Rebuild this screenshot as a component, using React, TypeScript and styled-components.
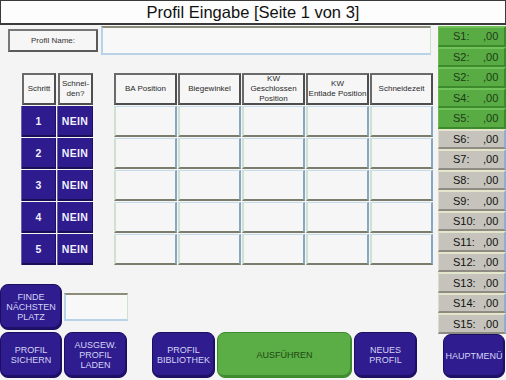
import { FC, Fragment } from "react";
import styled, { createGlobalStyle } from "styled-components";

const GlobalStyle = createGlobalStyle`
  html, body {
    margin: 0;
    padding: 0;
    background: #f4f4f4;
  }
  * {
    box-sizing: border-box;
  }
`;

const Screen = styled.div`
  width: 506px;
  height: 380px;
  display: grid;
  grid-template-columns: 438px 68px;
  grid-template-rows: 25px 355px;
  background: #f4f4f4;
  font-family: "Liberation Sans", Arial, sans-serif;
  overflow: hidden;
`;

const TitleBar = styled.div`
  grid-column: 1 / 3;
  background: #fdfdfd;
  border: 1px solid #3a3a3a;
  border-bottom-width: 2px;
  display: flex;
  align-items: center;
  justify-content: center;
  font-size: 16.5px;
  color: #111;
`;

const Main = styled.div`
  display: flex;
  flex-direction: column;
`;

const NameRow = styled.div`
  display: flex;
  align-items: center;
  gap: 3px;
  margin-top: 1px;
  padding-left: 8px;
  height: 29px;
`;

const NameLabel = styled.div`
  width: 90px;
  height: 23px;
  border: 2px solid #5a5a5a;
  border-top-color: #777;
  border-left-color: #777;
  background: #f6f6f6;
  display: flex;
  align-items: center;
  justify-content: center;
  font-size: 8px;
  color: #333;
`;

const TextField = styled.div<{ $w: number; $h: number }>`
  width: ${(p) => p.$w}px;
  height: ${(p) => p.$h}px;
  background: #f8f8f8;
  border-top: 2px solid #8c8c7a;
  border-left: 2px solid #b8d2ea;
  border-bottom: 2px solid #b8d2ea;
  border-right: 1px solid #cfe2cf;
`;

const Tables = styled.div`
  display: flex;
  gap: 21px;
  margin-top: 18px;
  padding-left: 22px;
`;

const Grid = styled.div<{ $cols: string }>`
  display: grid;
  grid-template-columns: ${(p) => p.$cols};
  grid-template-rows: 32px repeat(5, 31px);
  column-gap: 1px;
  row-gap: 1px;
  align-content: start;
`;

const HeadCell = styled.div`
  border: 2px solid #4e4e4e;
  border-top-color: #6a6a6a;
  border-left-color: #6a6a6a;
  background: #f6f6f6;
  display: flex;
  align-items: center;
  justify-content: center;
  text-align: center;
  font-size: 8px;
  line-height: 10px;
  color: #2a2a2a;
`;

const StepCell = styled.div`
  background: #2e1b8d;
  border-right: 1px solid #1c1060;
  border-bottom: 2px solid #1a0f55;
  display: flex;
  align-items: center;
  justify-content: center;
  color: #f0f0ff;
  font-weight: bold;
  font-size: 10.5px;
  letter-spacing: 0.3px;
`;

const StepGrid = styled(Grid)`
  column-gap: 2px;
  & > ${StepCell} {
    box-shadow: -1px 0 0 #6a62a8;
  }
`;

const ValueCell = styled.div`
  background: #f6f6f6;
  border-top: 1px solid #c6dcec;
  border-left: 2px solid #cfe2cf;
  border-right: 2px solid #86a6c4;
  border-bottom: 2px solid #7c7c6c;
`;

const Bottom = styled.div`
  margin-top: auto;
  display: flex;
  flex-direction: column;
  gap: 2px;
  padding-bottom: 2px;
`;

const ButtonRow = styled.div`
  display: flex;
  align-items: center;
  gap: 2px;
`;

const Spacer = styled.div<{ $w: number }>`
  width: ${(p) => p.$w}px;
`;

const PadButton = styled.div<{ $w?: number; $h?: number; $green?: boolean }>`
  width: ${(p) => p.$w ?? 63}px;
  height: ${(p) => p.$h ?? 46}px;
  border-radius: 8px;
  background: ${(p) => (p.$green ? "#5bad45" : "#2f1c8e")};
  border: 1px solid ${(p) => (p.$green ? "#3d8a2e" : "#1c0f60")};
  box-shadow: inset -1px -2px 0 ${(p) => (p.$green ? "#3f8c30" : "#1e1066")};
  display: flex;
  align-items: center;
  justify-content: center;
  text-align: center;
  font-size: 9px;
  line-height: 10px;
  color: ${(p) => (p.$green ? "#1e4a14" : "#d4d4f6")};
  text-transform: uppercase;
`;

const Side = styled.div`
  display: flex;
  flex-direction: column;
  padding-top: 1px;
`;

const SList = styled.div`
  display: grid;
  height: 308px;
  grid-template-rows: repeat(15, 1fr);
`;

const SButton = styled.div<{ $on: boolean }>`
  display: grid;
  grid-template-columns: 14px 30px 1fr;
  align-items: center;
  background: ${(p) => (p.$on ? "#59ab44" : "#c5c3bb")};
  border-top: 2px solid ${(p) => (p.$on ? "#72c25c" : "#e4e6cc")};
  border-left: 1px solid ${(p) => (p.$on ? "#6cbc56" : "#dcdcc8")};
  border-bottom: 2px solid ${(p) => (p.$on ? "#3c8a2c" : "#8e8c82")};
  border-right: 2px solid ${(p) => (p.$on ? "#3c8a2c" : "#8cb0d0")};
  font-size: 11px;
  color: ${(p) => (p.$on ? "#1d3d16" : "#111")};
`;

const MenuRow = styled.div`
  margin-top: auto;
  padding: 0 0 2px 5px;
`;

const stepHeads = ["Schritt", "Schnei-<br>den?"];
const valueHeads = [
  "BA Position",
  "Biegewinkel",
  "KW<br>Geschlossen<br>Position",
  "KW<br>Entlade Position",
  "Schneidezeit",
];
const sLabels = [
  "S1", "S2", "S2", "S4", "S5", "S6", "S7", "S8",
  "S9", "S10", "S11", "S12", "S13", "S14", "S15",
];

const Head: FC<{ html: string }> = ({ html }) => (
  <HeadCell dangerouslySetInnerHTML={{ __html: html }} />
);

const App: FC = () => {
  const steps = [1, 2, 3, 4, 5];

  return (
    <>
      <GlobalStyle />
      <Screen>
        <TitleBar>Profil Eingabe [Seite 1 von 3]</TitleBar>
        <Main>
          <NameRow>
            <NameLabel>Profil Name:</NameLabel>
            <TextField $w={330} $h={29} />
          </NameRow>
          <Tables>
            <StepGrid $cols="34px 35px">
              {stepHeads.map((h) => (
                <Head key={h} html={h} />
              ))}
              {steps.map((n) => (
                <Fragment key={n}>
                  <StepCell>{n}</StepCell>
                  <StepCell>NEIN</StepCell>
                </Fragment>
              ))}
            </StepGrid>
            <Grid $cols="repeat(5, 63px)">
              {valueHeads.map((h) => (
                <Head key={h} html={h} />
              ))}
              {steps.map((n) =>
                valueHeads.map((h) => <ValueCell key={`${n}-${h}`} />)
              )}
            </Grid>
          </Tables>
          <Bottom>
            <ButtonRow>
              <PadButton $w={62}>
                Finde
                <br />
                Nächsten
                <br />
                Platz
              </PadButton>
              <TextField $w={64} $h={28} />
            </ButtonRow>
            <ButtonRow>
              <PadButton $w={62}>
                Profil
                <br />
                Sichern
              </PadButton>
              <PadButton>
                Ausgew.
                <br />
                Profil
                <br />
                Laden
              </PadButton>
              <Spacer $w={21} />
              <PadButton>
                Profil
                <br />
                Bibliothek
              </PadButton>
              <PadButton $w={135} $green>
                Ausführen
              </PadButton>
              <PadButton>
                Neues
                <br />
                Profil
              </PadButton>
            </ButtonRow>
          </Bottom>
        </Main>
        <Side>
          <SList>
            {sLabels.map((s, i) => (
              <SButton key={i} $on={i < 5}>
                <span />
                <span>{s}:</span>
                <span>,00</span>
              </SButton>
            ))}
          </SList>
          <MenuRow>
            <PadButton $w={62} $h={44}>
              Hauptmenü
            </PadButton>
          </MenuRow>
        </Side>
      </Screen>
    </>
  );
};

export default App;
